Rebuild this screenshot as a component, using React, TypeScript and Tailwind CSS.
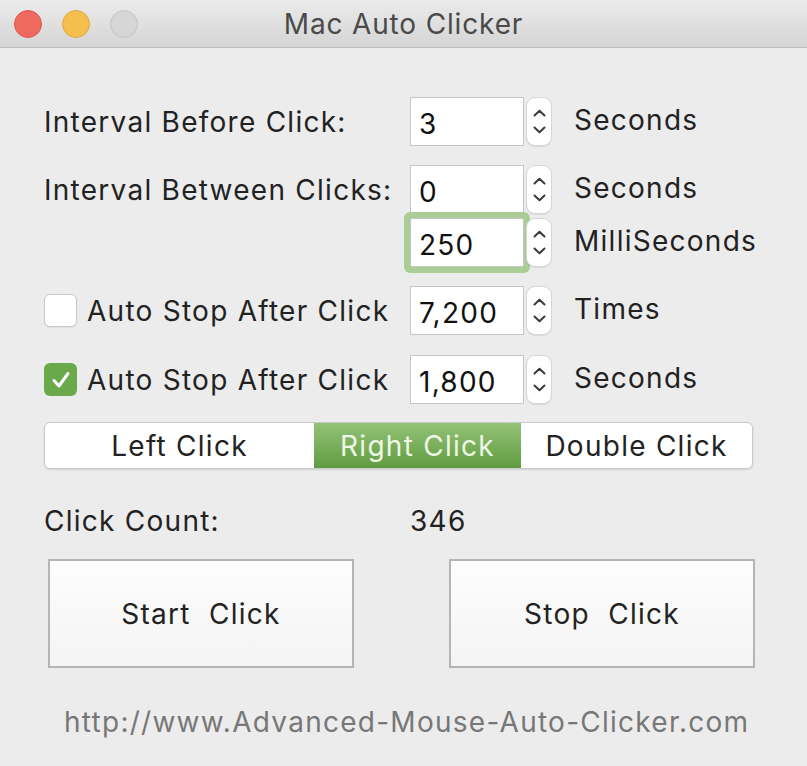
import type { ReactNode } from 'react'

function Chevron({ down }: { down?: boolean }) {
  return (
    <svg width="13" height="8" viewBox="0 0 13 8">
      <path
        d={down ? 'M1.5 1.5 L6.5 6.2 L11.5 1.5' : 'M1.5 6.5 L6.5 1.8 L11.5 6.5'}
        stroke="#3a3a3a"
        strokeWidth="2"
        fill="none"
        strokeLinecap="round"
        strokeLinejoin="round"
      />
    </svg>
  )
}

function Stepper() {
  return (
    <div className="ml-[2px] flex h-[49px] w-[26px] flex-col items-center justify-center gap-[9px] rounded-[9px] border border-[#d6d6d6] bg-white shadow-[0_1px_1px_rgba(0,0,0,0.08)]">
      <Chevron />
      <Chevron down />
    </div>
  )
}

function NumberField({ value, focused }: { value: string; focused?: boolean }) {
  return (
    <div className="flex items-center">
      <div
        className={`flex h-[49px] w-[114px] items-center border border-[#c6c6c6] bg-white pl-[8px] pt-[5px] text-[28px] text-[#111] ${
          focused ? 'rounded-[2px] ring-[6px] ring-[#a9cd95]' : ''
        }`}
      >
        {value}
      </div>
      <Stepper />
    </div>
  )
}

function Row({ label, value, unit, focused, className }: { label: ReactNode; value: string; unit: string; focused?: boolean; className?: string }) {
  return (
    <div className={`flex items-center ${className ?? ''}`}>
      <div className="flex w-[366px] items-center">{label}</div>
      <NumberField value={value} focused={focused} />
      <div className="ml-[22px] -mt-[4px]">{unit}</div>
    </div>
  )
}

function CheckBox({ checked }: { checked?: boolean }) {
  return checked ? (
    <div className="flex h-[33px] w-[33px] items-center justify-center rounded-[6px] bg-[#6aa84c]">
      <svg width="20" height="18" viewBox="0 0 20 18">
        <path d="M3 9.5 L8 15 L17 2.5" stroke="#fff" strokeWidth="3" fill="none" strokeLinecap="round" strokeLinejoin="round" />
      </svg>
    </div>
  ) : (
    <div className="h-[33px] w-[33px] rounded-[6px] border border-[#c9c9c9] bg-white shadow-[0_1px_1px_rgba(0,0,0,0.06)]" />
  )
}

export default function App() {
  return (
    <div className="h-[766px] w-[807px] overflow-hidden bg-[#ececec] font-['Inter','Liberation_Sans',sans-serif] text-[28px] tracking-[0.045em] text-[#222]">
      {/* title bar */}
      <div className="relative flex h-[48px] items-center justify-center border-b border-[#bdbdbd] bg-gradient-to-b from-[#ebebeb] to-[#d5d5d5]">
        <div className="absolute left-[14px] top-[10px] flex gap-[20px]">
          <div className="h-[28px] w-[28px] rounded-full border border-[#e0574c] bg-[#ef6a5e]" />
          <div className="h-[28px] w-[28px] rounded-full border border-[#e0a93e] bg-[#f5bf4f]" />
          <div className="h-[28px] w-[28px] rounded-full border border-[#c4c4c4] bg-[#d6d6d6]" />
        </div>
        <span className="text-[#4a4a4a] tracking-[0.03em]">Mac Auto Clicker</span>
      </div>

      <div className="pl-[44px]">
        <Row className="mt-[49px]" label="Interval Before Click:" value="3" unit="Seconds" />
        <Row className="mt-[19px]" label="Interval Between Clicks:" value="0" unit="Seconds" />
        <Row className="mt-[4px]" label="" value="250" unit="MilliSeconds" focused />
        <Row
          className="mt-[19px]"
          label={
            <>
              <CheckBox />
              <span className="ml-[10px]">Auto Stop After Click</span>
            </>
          }
          value="7,200"
          unit="Times"
        />
        <Row
          className="mt-[20px]"
          label={
            <>
              <CheckBox checked />
              <span className="ml-[10px]">Auto Stop After Click</span>
            </>
          }
          value="1,800"
          unit="Seconds"
        />

        {/* click type segmented control */}
        <div className="mt-[18px] flex h-[47px] w-[709px] overflow-hidden rounded-[6px] border border-[#cacaca] bg-white shadow-[0_1px_2px_rgba(0,0,0,0.12)]">
          <div className="flex w-[269px] items-center justify-center">Left Click</div>
          <div className="flex w-[207px] items-center justify-center bg-gradient-to-b from-[#94c277] to-[#5f9c3f] text-[#eef7e6]">
            Right Click
          </div>
          <div className="flex flex-1 items-center justify-center">Double Click</div>
        </div>

        <div className="mt-[37px] flex h-[30px] items-center">
          <span className="w-[366px]">Click Count:</span>
          <span>346</span>
        </div>

        <div className="mt-[23px] flex pl-[4px]">
          <button className="flex h-[109px] w-[306px] items-center justify-center whitespace-pre border-2 border-[#b5b5b5] bg-gradient-to-b from-[#fdfdfd] to-[#f4f4f4]">
            Start  Click
          </button>
          <button className="ml-[95px] flex h-[109px] w-[306px] items-center justify-center whitespace-pre border-2 border-[#b5b5b5] bg-gradient-to-b from-[#fdfdfd] to-[#f4f4f4]">
            Stop  Click
          </button>
        </div>

        <div className="mt-[33px] pl-[20px] text-[#777777]">http://www.Advanced-Mouse-Auto-Clicker.com</div>
      </div>
    </div>
  )
}
